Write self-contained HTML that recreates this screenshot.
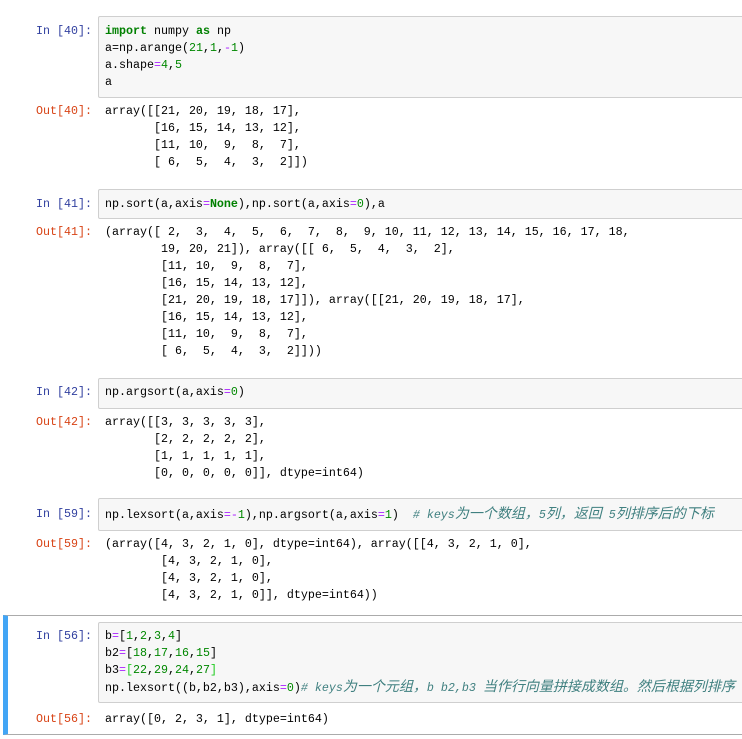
<!DOCTYPE html>
<html><head><meta charset="utf-8"><style>
body{margin:0;background:#fff;width:742px;height:739px;position:relative;overflow:hidden;font-family:"Liberation Mono","Noto Sans CJK SC",monospace;font-size:11.67px;color:#000}
.p{position:absolute;right:650px;white-space:pre;line-height:17px}
.in{color:#303F9F}.out{color:#D84315}
.box{position:absolute;left:98px;right:-2px;background:#f7f7f7;border:1px solid #cfcfcf;border-radius:2px}
.t{position:absolute;left:105px;white-space:pre;line-height:17px}
.k{color:#008000;font-weight:bold}.n{color:#008800}.o{color:#AA22FF}
.c{color:#408080;font-style:italic}
.w{font-family:"Noto Sans CJK SC",sans-serif;font-size:14px;font-style:italic;line-height:1}
.sel{position:absolute;left:3px;right:-2px;top:615px;height:120px;border:1px solid #ababab;border-left:5px solid #42A5F5;box-sizing:border-box}
</style></head><body>
<div class="sel"></div>

<div class="p in" style="top:23px">In [40]:</div>
<div class="box" style="top:16px;height:80px"></div>
<div class="t" style="top:23px"><span class="k">import</span> numpy <span class="k">as</span> np
a=np.arange(<span class="n">21</span>,<span class="n">1</span>,<span class="o">-</span><span class="n">1</span>)
a.shape<span class="o">=</span><span class="n">4</span>,<span class="n">5</span>
a</div>

<div class="p out" style="top:103px">Out[40]:</div>
<div class="t" style="top:103px">array([[21, 20, 19, 18, 17],
       [16, 15, 14, 13, 12],
       [11, 10,  9,  8,  7],
       [ 6,  5,  4,  3,  2]])</div>

<div class="p in" style="top:196px">In [41]:</div>
<div class="box" style="top:189px;height:28px"></div>
<div class="t" style="top:196px">np.sort(a,axis<span class="o">=</span><span class="k">None</span>),np.sort(a,axis<span class="o">=</span><span class="n">0</span>),a</div>

<div class="p out" style="top:224px">Out[41]:</div>
<div class="t" style="top:224px">(array([ 2,  3,  4,  5,  6,  7,  8,  9, 10, 11, 12, 13, 14, 15, 16, 17, 18,
        19, 20, 21]), array([[ 6,  5,  4,  3,  2],
        [11, 10,  9,  8,  7],
        [16, 15, 14, 13, 12],
        [21, 20, 19, 18, 17]]), array([[21, 20, 19, 18, 17],
        [16, 15, 14, 13, 12],
        [11, 10,  9,  8,  7],
        [ 6,  5,  4,  3,  2]]))</div>

<div class="p in" style="top:384px">In [42]:</div>
<div class="box" style="top:378px;height:29px"></div>
<div class="t" style="top:384px">np.argsort(a,axis<span class="o">=</span><span class="n">0</span>)</div>

<div class="p out" style="top:414px">Out[42]:</div>
<div class="t" style="top:414px">array([[3, 3, 3, 3, 3],
       [2, 2, 2, 2, 2],
       [1, 1, 1, 1, 1],
       [0, 0, 0, 0, 0]], dtype=int64)</div>

<div class="p in" style="top:506px">In [59]:</div>
<div class="box" style="top:498px;height:31px"></div>
<div class="t" style="top:506px">np.lexsort(a,axis<span class="o">=-</span><span class="n">1</span>),np.argsort(a,axis<span class="o">=</span><span class="n">1</span>)  <span class="c"># keys<span class="w">为一个数组，</span>5<span class="w">列，返回</span> 5<span class="w">列排序后的下标</span></span></div>

<div class="p out" style="top:536px">Out[59]:</div>
<div class="t" style="top:536px">(array([4, 3, 2, 1, 0], dtype=int64), array([[4, 3, 2, 1, 0],
        [4, 3, 2, 1, 0],
        [4, 3, 2, 1, 0],
        [4, 3, 2, 1, 0]], dtype=int64))</div>

<div class="p in" style="top:628px">In [56]:</div>
<div class="box" style="top:622px;height:79px"></div>
<div class="t" style="top:628px">b<span class="o">=</span>[<span class="n">1</span>,<span class="n">2</span>,<span class="n">3</span>,<span class="n">4</span>]
b2<span class="o">=</span>[<span class="n">18</span>,<span class="n">17</span>,<span class="n">16</span>,<span class="n">15</span>]
b3<span class="o">=</span><span style="color:#2c2">[</span><span class="n">22</span>,<span class="n">29</span>,<span class="n">24</span>,<span class="n">27</span><span style="color:#2c2">]</span>
np.lexsort((b,b2,b3),axis<span class="o">=</span><span class="n">0</span>)<span class="c"># keys<span class="w">为一个元组，</span>b b2,b3 <span class="w">当作行向量拼接成数组。然后根据列排序</span></span></div>

<div class="p out" style="top:711px">Out[56]:</div>
<div class="t" style="top:711px">array([0, 2, 3, 1], dtype=int64)</div>
</body></html>
